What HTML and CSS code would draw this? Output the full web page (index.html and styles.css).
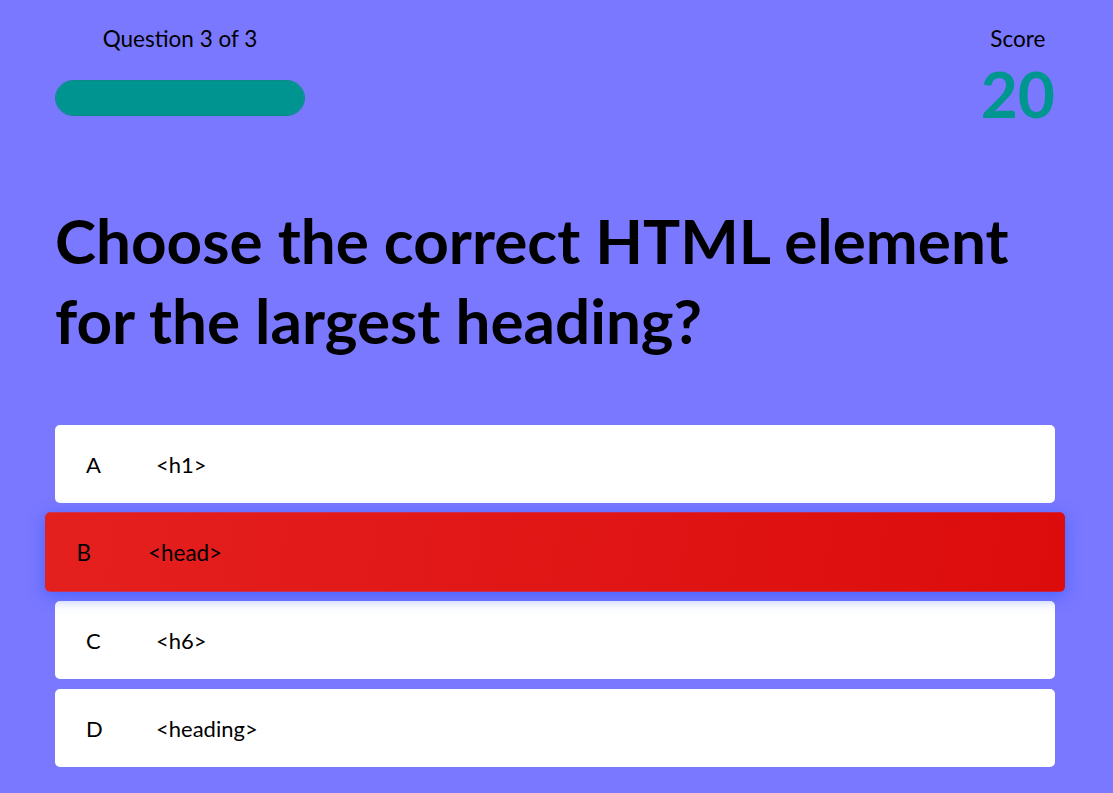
FILE: index.html
```html
<!DOCTYPE html>
<html lang="en">
<head>
<meta charset="utf-8">
<title>Quiz</title>
<link rel="stylesheet" href="styles.css">
</head>
<body>
<main class="quiz">
  <header class="hud">
    <div class="progress-block">
      <p class="hud-label">Question 3 of 3</p>
      <div class="progress-bar"><div class="progress-fill"></div></div>
    </div>
    <div class="score-block">
      <p class="hud-label">Score</p>
      <p class="score-value">20</p>
    </div>
  </header>
  <h1 class="question">Choose the correct HTML element for the largest heading?</h1>
  <div class="choices">
    <div class="choice"><span class="choice-prefix">A</span><span class="choice-text">&lt;h1&gt;</span></div>
    <div class="choice choice-incorrect"><span class="choice-prefix">B</span><span class="choice-text">&lt;head&gt;</span></div>
    <div class="choice"><span class="choice-prefix">C</span><span class="choice-text">&lt;h6&gt;</span></div>
    <div class="choice"><span class="choice-prefix">D</span><span class="choice-text">&lt;heading&gt;</span></div>
  </div>
</main>
</body>
</html>
```

FILE: styles.css
```css
* { box-sizing: border-box; }
html, body { margin: 0; padding: 0; }
body {
  background: #7a78ff;
  font-family: Lato, "Open Sans", sans-serif;
  color: #000;
  min-height: 100vh;
}
.quiz {
  max-width: 1003px;
  margin: 0 auto;
  padding: 24px 3px 0 0;
}
.hud {
  display: flex;
  justify-content: space-between;
  align-items: flex-start;
}
.progress-block {
  width: 250px;
  display: flex;
  flex-direction: column;
  align-items: center;
}
.hud-label {
  margin: 0;
  font-size: 22.5px;
  line-height: 30px;
}
.progress-bar {
  margin-top: 26px;
  width: 250px;
  height: 36px;
  border-radius: 18px;
  border: 1px solid #0b8a86;
  overflow: hidden;
}
.progress-fill {
  width: 100%;
  height: 100%;
  background: #009490;
}
.score-block {
  display: flex;
  flex-direction: column;
  align-items: center;
}
.score-value {
  margin: 4px 0 0;
  font-size: 64px;
  font-weight: 700;
  line-height: 72px;
  color: #009690;
}
.question {
  margin: 70px 0 0;
  font-size: 62px;
  font-weight: 700;
  line-height: 80px;
}
.choices {
  margin-top: 65px;
  display: flex;
  flex-direction: column;
  gap: 10px;
}
.choice {
  display: flex;
  align-items: center;
  height: 78px;
  background: #fff;
  border-radius: 5px;
  padding: 0 31px;
  font-size: 22px;
}
.choice-prefix {
  width: 70px;
}
.choice-incorrect {
  background: linear-gradient(100deg, #e4201f, #dd0c0c);
  transform: scale(1.02);
  box-shadow: 0 4px 16px rgba(50, 90, 255, 0.7);
}
```
